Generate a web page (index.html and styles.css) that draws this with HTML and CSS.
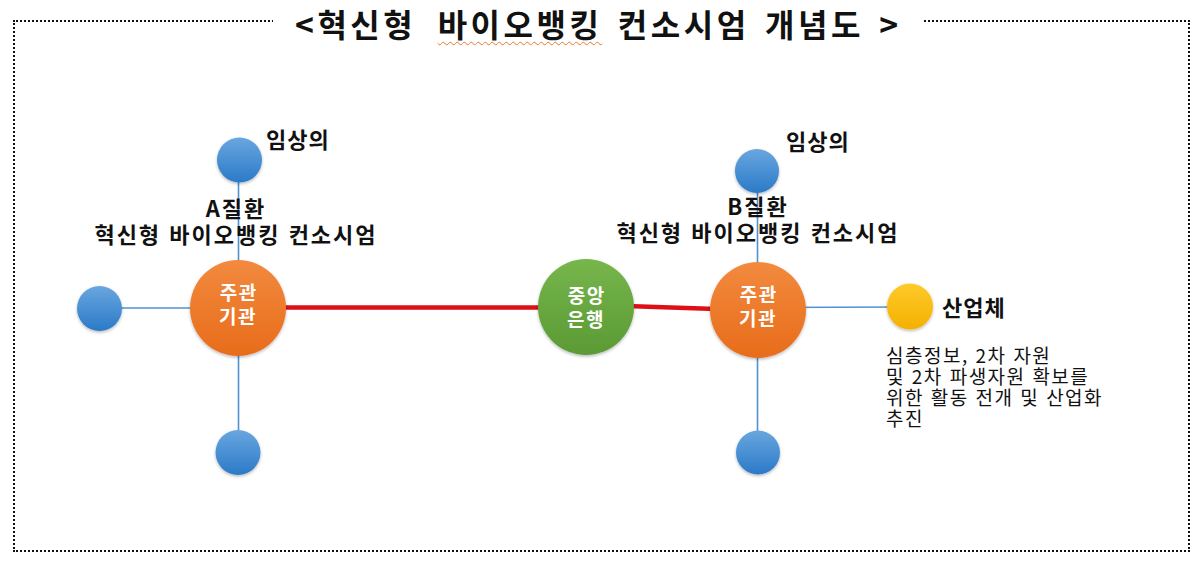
FILE: index.html
```html
<!DOCTYPE html>
<html lang="ko">
<head>
<meta charset="utf-8">
<title>혁신형 바이오뱅킹 컨소시엄 개념도</title>
<link rel="stylesheet" href="styles.css">
</head>
<body>
<div class="page">
  <fieldset class="frame">
    <legend class="title">&lt;혁신형 <span class="spell">바이오뱅킹</span> 컨소시엄 개념도 &gt;</legend>
  </fieldset>

  <div class="diagram">
    <svg class="links" width="1200" height="579" viewBox="0 0 1200 579" aria-hidden="true">
      <defs>
        <linearGradient id="gBlue" x1="0" y1="0" x2="0" y2="1">
          <stop offset="0" stop-color="#69a6df"/>
          <stop offset="1" stop-color="#2b7ac8"/>
        </linearGradient>
        <linearGradient id="gOrange" x1="0" y1="0" x2="0" y2="1">
          <stop offset="0" stop-color="#f28a3e"/>
          <stop offset="1" stop-color="#e86c1b"/>
        </linearGradient>
        <linearGradient id="gGreen" x1="0" y1="0" x2="0" y2="1">
          <stop offset="0" stop-color="#77b64c"/>
          <stop offset="1" stop-color="#5b9a34"/>
        </linearGradient>
        <linearGradient id="gYellow" x1="0" y1="0" x2="0" y2="1">
          <stop offset="0" stop-color="#ffca2a"/>
          <stop offset="1" stop-color="#f4b000"/>
        </linearGradient>
        <filter id="shadow" x="-20%" y="-20%" width="140%" height="150%">
          <feDropShadow dx="0" dy="1.5" stdDeviation="1.5" flood-color="#000" flood-opacity="0.28"/>
        </filter>
      </defs>

      <g class="blue-lines">
        <line x1="238.5" y1="160" x2="238.5" y2="452"/>
        <line x1="100" y1="308" x2="238" y2="308"/>
        <line x1="757.5" y1="171" x2="757.5" y2="452"/>
        <line x1="758" y1="307.5" x2="908" y2="307"/>
      </g>
      <g class="red-lines">
        <line x1="280" y1="307.5" x2="545" y2="307.5"/>
        <line x1="626" y1="306" x2="716" y2="309"/>
      </g>

      <g filter="url(#shadow)">
        <circle cx="239.5" cy="160" r="22.5" fill="url(#gBlue)"/>
        <circle cx="99.5" cy="308.5" r="22.5" fill="url(#gBlue)"/>
        <circle cx="238" cy="452.5" r="22.5" fill="url(#gBlue)"/>
        <circle cx="757" cy="171" r="22" fill="url(#gBlue)"/>
        <circle cx="758" cy="452.5" r="22" fill="url(#gBlue)"/>
        <circle cx="910" cy="306.5" r="23" fill="url(#gYellow)"/>
        <circle cx="238" cy="308" r="48" fill="url(#gOrange)"/>
        <circle cx="586" cy="307" r="48" fill="url(#gGreen)"/>
        <circle cx="758" cy="310" r="48" fill="url(#gOrange)"/>
      </g>
    </svg>

    <div class="label bold clin clin-a">임상의</div>
    <div class="label bold clin clin-b">임상의</div>
    <div class="label bold block block-a">A질환<br>혁신형 바이오뱅킹 컨소시엄</div>
    <div class="label bold block block-b">B질환<br>혁신형 바이오뱅킹 컨소시엄</div>

    <div class="label node node-a">주관<br>기관</div>
    <div class="label node node-c">중앙<br>은행</div>
    <div class="label node node-b">주관<br>기관</div>

    <div class="label bold ind">산업체</div>
    <p class="label desc">심층정보, 2차 자원<br>및 2차 파생자원 확보를<br>위한 활동 전개 및 산업화<br>추진</p>
  </div>
</div>
</body>
</html>
```

FILE: styles.css
```css
* { box-sizing: border-box; }

html, body {
  margin: 0;
  padding: 0;
  background: #ffffff;
}

body {
  font-family: "Noto Sans CJK KR", "Noto Sans", sans-serif;
  color: #111;
}

.page {
  position: relative;
  width: 1200px;
  height: 579px;
  overflow: hidden;
}

.frame {
  margin: 1px 10px 0 13px;
  padding: 0;
  height: 551px;
  border: 2px dotted #111;
  min-width: 0;
}

.title {
  margin-left: 258px;
  padding: 4px 20px 0 22px;
  font-size: 32px;
  line-height: 36px;
  font-weight: 700;
  white-space: pre;
  letter-spacing: 3.5px;
  word-spacing: 3px;
  color: #111;
}

.spell {
  margin-left: 6px;
  text-decoration: underline wavy #e8782a;
  text-decoration-thickness: 1px;
  text-underline-offset: 4px;
  text-decoration-skip-ink: none;
}

.diagram {
  position: absolute;
  inset: 0;
}

.links {
  position: absolute;
  left: 0;
  top: 0;
}

.blue-lines line {
  stroke: #4f92d2;
  stroke-width: 1.6;
}

.red-lines line {
  stroke: #dc1016;
  stroke-width: 4.5;
}

.label {
  position: absolute;
  margin: 0;
  white-space: nowrap;
}

.bold {
  font-weight: 700;
  font-size: 22px;
  line-height: 28px;
  letter-spacing: 1px;
  color: #111;
}

.clin-a { left: 266px; top: 124px; }
.clin-b { left: 786px; top: 126px; }

.block {
  width: 320px;
  text-align: center;
  line-height: 26px;
  letter-spacing: 2px;
}
.block-a { left: 76px; top: 194px; }
.block-b { left: 598px; top: 192px; }

.node {
  width: 96px;
  text-align: center;
  color: #ffffff;
  font-size: 19px;
  line-height: 24px;
  font-weight: 700;
  letter-spacing: 1.5px;
  text-indent: 1.5px;
}
.node-a { left: 190px; top: 280px; }
.node-c { left: 538px; top: 283px; }
.node-b { left: 710px; top: 282px; }

.ind { left: 942px; top: 292px; }

.desc {
  left: 886px;
  top: 344px;
  font-size: 19px;
  line-height: 21px;
  letter-spacing: 1.5px;
  color: #111;
}
```
